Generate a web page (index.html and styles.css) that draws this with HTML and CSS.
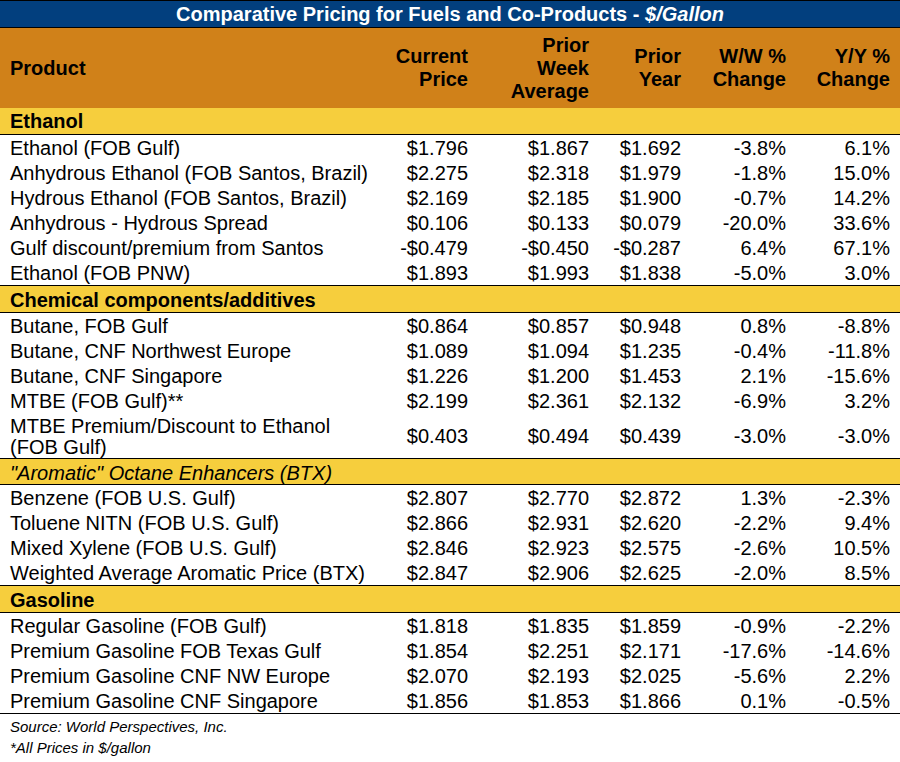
FILE: index.html
```html
<!DOCTYPE html>
<html>
<head>
<meta charset="utf-8">
<link rel="stylesheet" href="styles.css">
</head>
<body>
<div class="page">
  <div class="title">Comparative Pricing for Fuels and Co-Products - <em>$/Gallon</em></div>
  <div class="table">
    <div class="row head">
      <div class="cell prod">Product</div>
      <div class="cell">Current<br>Price</div>
      <div class="cell">Prior<br>Week<br>Average</div>
      <div class="cell">Prior<br>Year</div>
      <div class="cell">W/W %<br>Change</div>
      <div class="cell">Y/Y %<br>Change</div>
    </div>

    <div class="sec first">Ethanol</div>
    <div class="row"><div class="cell prod">Ethanol (FOB Gulf)</div><div class="cell">$1.796</div><div class="cell">$1.867</div><div class="cell">$1.692</div><div class="cell">-3.8%</div><div class="cell">6.1%</div></div>
    <div class="row"><div class="cell prod">Anhydrous Ethanol (FOB Santos, Brazil)</div><div class="cell">$2.275</div><div class="cell">$2.318</div><div class="cell">$1.979</div><div class="cell">-1.8%</div><div class="cell">15.0%</div></div>
    <div class="row"><div class="cell prod">Hydrous Ethanol (FOB Santos, Brazil)</div><div class="cell">$2.169</div><div class="cell">$2.185</div><div class="cell">$1.900</div><div class="cell">-0.7%</div><div class="cell">14.2%</div></div>
    <div class="row"><div class="cell prod">Anhydrous - Hydrous Spread</div><div class="cell">$0.106</div><div class="cell">$0.133</div><div class="cell">$0.079</div><div class="cell">-20.0%</div><div class="cell">33.6%</div></div>
    <div class="row"><div class="cell prod">Gulf discount/premium from Santos</div><div class="cell">-$0.479</div><div class="cell">-$0.450</div><div class="cell">-$0.287</div><div class="cell">6.4%</div><div class="cell">67.1%</div></div>
    <div class="row"><div class="cell prod">Ethanol (FOB PNW)</div><div class="cell">$1.893</div><div class="cell">$1.993</div><div class="cell">$1.838</div><div class="cell">-5.0%</div><div class="cell">3.0%</div></div>

    <div class="sec">Chemical components/additives</div>
    <div class="row"><div class="cell prod">Butane, FOB Gulf</div><div class="cell">$0.864</div><div class="cell">$0.857</div><div class="cell">$0.948</div><div class="cell">0.8%</div><div class="cell">-8.8%</div></div>
    <div class="row"><div class="cell prod">Butane, CNF Northwest Europe</div><div class="cell">$1.089</div><div class="cell">$1.094</div><div class="cell">$1.235</div><div class="cell">-0.4%</div><div class="cell">-11.8%</div></div>
    <div class="row"><div class="cell prod">Butane, CNF Singapore</div><div class="cell">$1.226</div><div class="cell">$1.200</div><div class="cell">$1.453</div><div class="cell">2.1%</div><div class="cell">-15.6%</div></div>
    <div class="row"><div class="cell prod">MTBE (FOB Gulf)**</div><div class="cell">$2.199</div><div class="cell">$2.361</div><div class="cell">$2.132</div><div class="cell">-6.9%</div><div class="cell">3.2%</div></div>
    <div class="row tall"><div class="cell prod">MTBE Premium/Discount to Ethanol<br>(FOB Gulf)</div><div class="cell">$0.403</div><div class="cell">$0.494</div><div class="cell">$0.439</div><div class="cell">-3.0%</div><div class="cell">-3.0%</div></div>

    <div class="sec ital">"Aromatic" Octane Enhancers (BTX)</div>
    <div class="row"><div class="cell prod">Benzene (FOB U.S. Gulf)</div><div class="cell">$2.807</div><div class="cell">$2.770</div><div class="cell">$2.872</div><div class="cell">1.3%</div><div class="cell">-2.3%</div></div>
    <div class="row"><div class="cell prod">Toluene NITN (FOB U.S. Gulf)</div><div class="cell">$2.866</div><div class="cell">$2.931</div><div class="cell">$2.620</div><div class="cell">-2.2%</div><div class="cell">9.4%</div></div>
    <div class="row"><div class="cell prod">Mixed Xylene (FOB U.S. Gulf)</div><div class="cell">$2.846</div><div class="cell">$2.923</div><div class="cell">$2.575</div><div class="cell">-2.6%</div><div class="cell">10.5%</div></div>
    <div class="row"><div class="cell prod">Weighted Average Aromatic Price (BTX)</div><div class="cell">$2.847</div><div class="cell">$2.906</div><div class="cell">$2.625</div><div class="cell">-2.0%</div><div class="cell">8.5%</div></div>

    <div class="sec">Gasoline</div>
    <div class="row"><div class="cell prod">Regular Gasoline (FOB Gulf)</div><div class="cell">$1.818</div><div class="cell">$1.835</div><div class="cell">$1.859</div><div class="cell">-0.9%</div><div class="cell">-2.2%</div></div>
    <div class="row"><div class="cell prod">Premium Gasoline FOB Texas Gulf</div><div class="cell">$1.854</div><div class="cell">$2.251</div><div class="cell">$2.171</div><div class="cell">-17.6%</div><div class="cell">-14.6%</div></div>
    <div class="row"><div class="cell prod">Premium Gasoline CNF NW Europe</div><div class="cell">$2.070</div><div class="cell">$2.193</div><div class="cell">$2.025</div><div class="cell">-5.6%</div><div class="cell">2.2%</div></div>
    <div class="row last"><div class="cell prod">Premium Gasoline CNF Singapore</div><div class="cell">$1.856</div><div class="cell">$1.853</div><div class="cell">$1.866</div><div class="cell">0.1%</div><div class="cell">-0.5%</div></div>
  </div>
  <div class="notes">
    <p>Source: World Perspectives, Inc.</p>
    <p>*All Prices in $/gallon</p>
  </div>
</div>
</body>
</html>
```
FILE: styles.css
```css
html, body {
  margin: 0;
  padding: 0;
  background: #ffffff;
}
body {
  font-family: "Liberation Sans", Arial, sans-serif;
  color: #000;
}
.page {
  width: 900px;
}
.title {
  box-sizing: border-box;
  height: 28px;
  padding-top: 1px;
  border-top: 1px solid #000;
  border-bottom: 1px solid #000;
  background: #023f7e;
  color: #fff;
  font-weight: bold;
  font-size: 20px;
  line-height: 25px;
  text-align: center;
}
.title em {
  font-style: italic;
}
.table {
  font-size: 20px;
}
.row {
  display: grid;
  grid-template-columns: 378px 100px 121px 92px 105px 104px;
  height: 25px;
  line-height: 21px;
}
.cell {
  box-sizing: border-box;
  padding-top: 2px;
  padding-right: 10px;
  text-align: right;
  white-space: nowrap;
  display: flex;
  flex-direction: column;
  justify-content: center;
  align-items: flex-end;
}
.cell.prod {
  padding-left: 10px;
  padding-right: 0;
  text-align: left;
  align-items: flex-start;
}
.head {
  height: 80px;
  background: #d08119;
  font-weight: bold;
  line-height: 23px;
}
.head .cell {
  display: block;
  align-self: center;
  padding-top: 0;
}
.tall {
  height: 45px;
}
.tall .cell.prod {
  display: block;
  align-self: center;
  padding-top: 2px;
}
.sec {
  box-sizing: border-box;
  height: 28px;
  padding: 3px 10px 0;
  background: #f6ce3d;
  font-weight: bold;
  line-height: 23px;
  border-top: 1px solid #000;
  border-bottom: 1px solid #000;
}
.sec.first {
  height: 27px;
  padding-top: 2px;
  border-top: none;
}
.sec.ital {
  height: 27px;
  padding-top: 3px;
  line-height: 22px;
  font-weight: normal;
  font-style: italic;
}
.last {
  box-sizing: border-box;
  height: 26px;
  border-bottom: 1px solid #000;
}
.notes {
  padding: 2px 10px 0;
  font-size: 15px;
  font-style: italic;
}
.notes p {
  margin: 0;
  line-height: 21px;
}
```
